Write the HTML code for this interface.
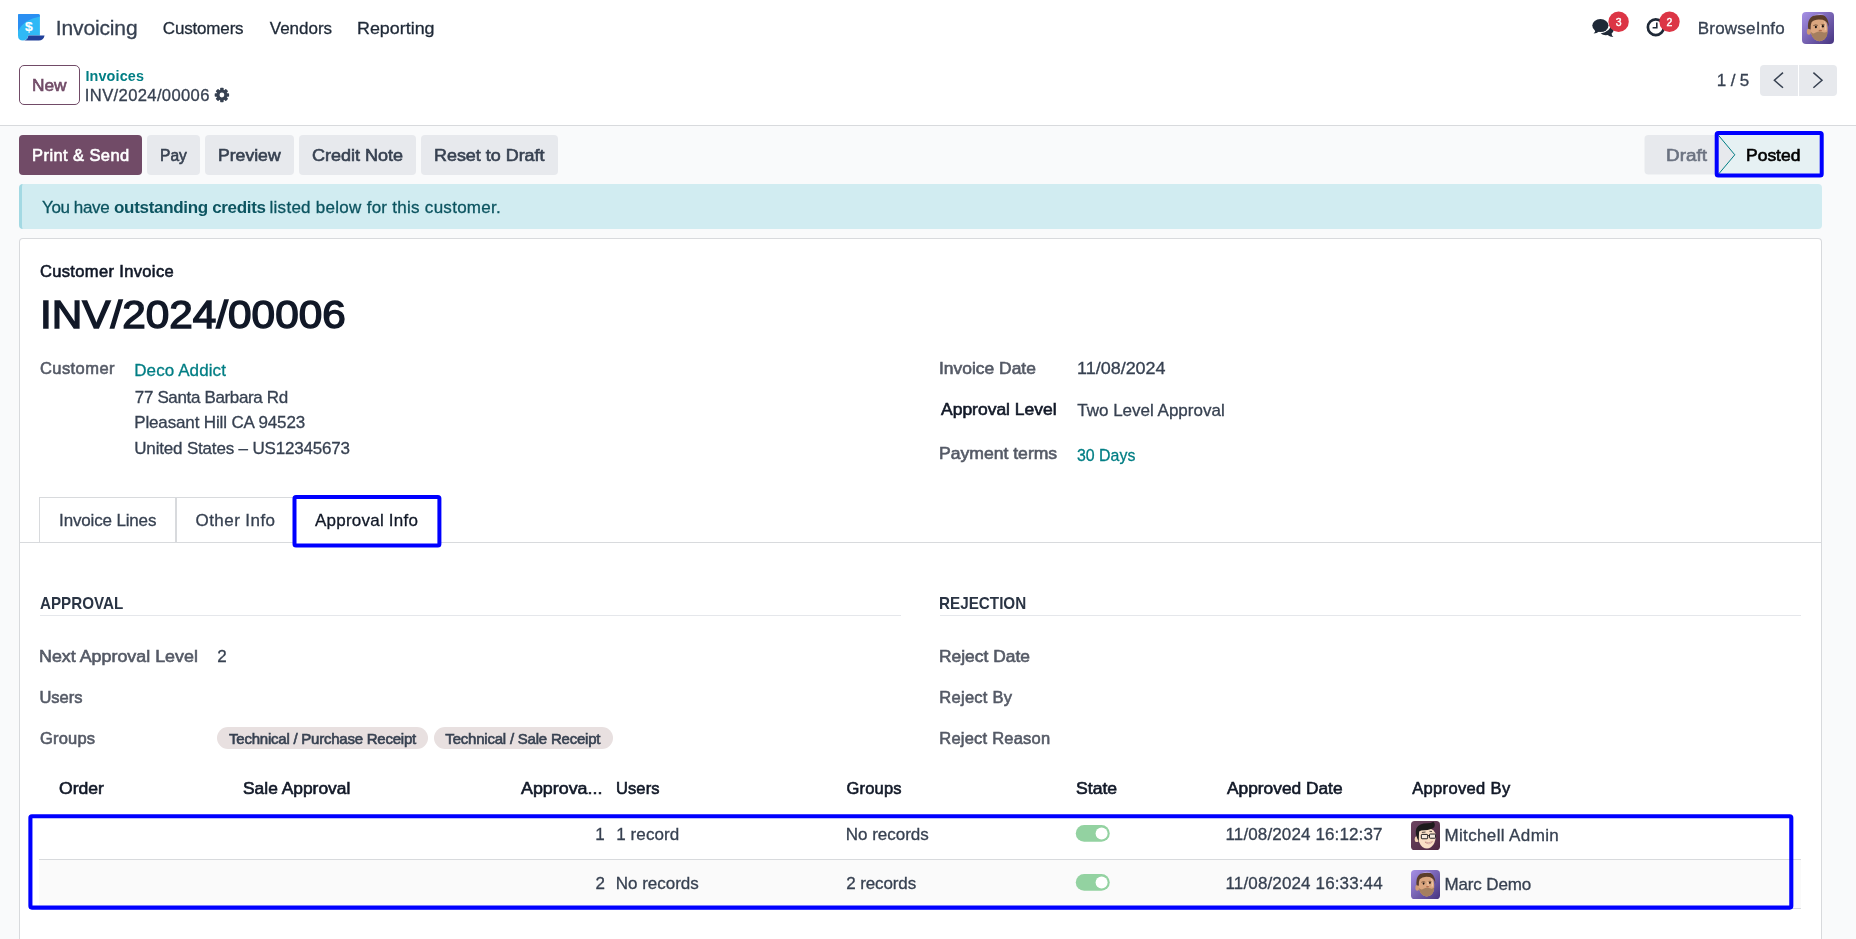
<!DOCTYPE html>
<html><head><meta charset="utf-8"><title>Odoo - INV/2024/00006</title>
<style>
html,body{margin:0;padding:0;}
body{width:1856px;height:939px;overflow:hidden;background:#f9fafb;position:relative;font-family:'Liberation Sans',sans-serif;}
.t{position:absolute;white-space:pre;line-height:1;font-family:'Liberation Sans',sans-serif;}
.b{position:absolute;box-sizing:border-box;}
</style></head><body>
<!-- top white area (navbar + control panel) -->
<div class="b" style="left:0;top:0;width:1856px;height:126px;background:#fff;border-bottom:1px solid #d8dadd;"></div>

<!-- New button -->
<div class="b" style="left:19px;top:65px;width:61px;height:40px;border:1px solid #714B67;border-radius:5px;background:#fff;"></div>

<!-- pager buttons -->
<div class="b" style="left:1759.5px;top:65px;width:38px;height:31px;background:#e7e9ed;border-radius:4px 0 0 4px;"></div>
<div class="b" style="left:1798.5px;top:65px;width:38px;height:31px;background:#e7e9ed;border-radius:0 4px 4px 0;"></div>

<!-- action buttons -->
<div class="b" style="left:19px;top:135px;width:122.75px;height:39.5px;background:#714B67;border-radius:4px;"></div>
<div class="b" style="left:147px;top:135px;width:52.75px;height:39.5px;background:#e7e9ed;border-radius:4px;"></div>
<div class="b" style="left:204.75px;top:135px;width:88.75px;height:39.5px;background:#e7e9ed;border-radius:4px;"></div>
<div class="b" style="left:298.75px;top:135px;width:116.75px;height:39.5px;background:#e7e9ed;border-radius:4px;"></div>
<div class="b" style="left:421px;top:135px;width:136.75px;height:39.5px;background:#e7e9ed;border-radius:4px;"></div>

<!-- alert -->
<div class="b" style="left:19px;top:184px;width:1802.5px;height:45px;background:#d1ecf1;border-left:3px solid #a3d9e3;border-radius:4px;"></div>

<!-- sheet -->
<div class="b" style="left:19px;top:238px;width:1803px;height:701px;background:#fff;border:1px solid #d8dadd;border-bottom:none;border-radius:4px 4px 0 0;"></div>

<!-- tabs -->
<div class="b" style="left:20px;top:542px;width:1801px;height:1px;background:#d8dadd;"></div>
<div class="b" style="left:39px;top:497px;width:137px;height:46px;border:1px solid #d8dadd;border-bottom:none;"></div>
<div class="b" style="left:176px;top:497px;width:118px;height:46px;border:1px solid #d8dadd;border-bottom:none;"></div>
<div class="b" style="left:293px;top:497px;width:146px;height:46px;border:1px solid #d8dadd;border-bottom:none;background:#fff;"></div>

<!-- section underlines -->
<div class="b" style="left:40px;top:615px;width:861px;height:1px;background:#e5e7eb;"></div>
<div class="b" style="left:940px;top:615px;width:861px;height:1px;background:#e5e7eb;"></div>

<!-- tags -->
<div class="b" style="left:217px;top:727.25px;width:211.25px;height:21.75px;background:#e8e0e0;border-radius:11px;"></div>
<div class="b" style="left:433.75px;top:727.25px;width:179px;height:21.75px;background:#e8e0e0;border-radius:11px;"></div>

<!-- table rows -->
<div class="b" style="left:39px;top:859px;width:1762px;height:1px;background:#d8dadd;"></div>
<div class="b" style="left:39px;top:860px;width:1762px;height:48px;background:#fafafa;"></div>
<div class="b" style="left:39px;top:908px;width:1762px;height:1px;background:#d8dadd;"></div>

<!-- all vector art -->
<svg class="b" style="left:0;top:0;" width="1856" height="939" viewBox="0 0 1856 939">
  <defs>
    <linearGradient id="gm" x1="0" y1="0" x2="1" y2="1"><stop offset="0" stop-color="#a791e6"/><stop offset="1" stop-color="#46347f"/></linearGradient>
    <linearGradient id="ga" x1="0" y1="0" x2="1" y2="1"><stop offset="0" stop-color="#6d4561"/><stop offset="1" stop-color="#4c2742"/></linearGradient>
    <g id="marc">
      <rect x="0" y="0" width="32" height="32" rx="4" fill="url(#gm)"/>
      <ellipse cx="6.9" cy="19.6" rx="2.1" ry="3.2" fill="#cf9a74"/>
      <path d="M8 14 Q8.4 6 16.6 5.6 Q25.4 6 25.6 15.6 Q26 24 22.2 27.6 Q17.2 30.8 12.8 27.6 Q8.4 24 8 14Z" fill="#dba67f"/>
      <path d="M21.5 8.5 Q24.6 11 24.4 18 L22.6 18.5 Q23.4 12 21.5 8.5Z" fill="#ecc3a2"/>
      <path d="M8.9 19.8 Q11 22.6 13.8 20.6 Q17 18.6 21 20.2 Q23.8 21.4 25.5 19 Q25.8 24.4 22.2 27.6 Q17.2 30.8 12.8 27.6 Q9.2 24.6 8.9 19.8Z" fill="#a57f5f"/>
      <path d="M6.2 16.8 Q4.4 4.6 15 2.4 Q26.2 0.8 27 15 Q25.6 9.4 20.6 7.8 Q13 6.4 9.6 10.2 Q8.4 12.8 8.6 17.4Z" fill="#5b3d2a"/>
      <path d="M10.6 3.8 Q16.4 0.6 23 3.2 Q17 2.4 10.6 3.8Z" fill="#b9a6ea"/>
      <ellipse cx="13.9" cy="15" rx="1" ry="1.25" fill="#161010"/>
      <ellipse cx="20.9" cy="14.2" rx="1" ry="1.25" fill="#161010"/>
      <path d="M11.4 13.6 Q13.6 12.3 15.8 13.4" stroke="#4a3222" stroke-width=".7" fill="none"/>
      <path d="M19.4 12.7 Q21 12 22.6 12.9" stroke="#4a3222" stroke-width=".6" fill="none"/>
      <ellipse cx="18.3" cy="18.5" rx="1.7" ry=".85" fill="#b06c4c"/>
      <path d="M18.3 13.2 L19.1 17.4" stroke="#edc4a4" stroke-width="1.1" />
    </g>
    <g id="mitch">
      <rect x="0" y="0" width="32" height="32" rx="4" fill="url(#ga)"/>
      <!-- ear -->
      <ellipse cx="6.4" cy="20" rx="2.3" ry="3.3" fill="#f3d2b4"/>
      <!-- face -->
      <path d="M7.6 14 Q8 8 17 8 Q27.4 8 27.2 17 Q27 25 22 29 Q17.4 32 12.6 28.6 Q7.6 24 7.6 14Z" fill="#f9dfc6"/>
      <!-- hair -->
      <path d="M8.6 22.5 Q3.6 14 6 8 Q9 2.6 18 2.6 Q22 2.6 24.6 0.8 Q27.4 2.4 25.6 7 Q22 10 15 10.2 Q10.6 10.2 9 11.6 Q8.6 16 8.6 22.5Z" fill="#1d1b1c"/>
      <!-- brows -->
      <path d="M12 12.6 L16 12.2" stroke="#2a2224" stroke-width=".9"/>
      <path d="M20.4 11.4 L23.2 11.6" stroke="#2a2224" stroke-width=".9"/>
      <!-- glasses -->
      <rect x="11.4" y="14.8" width="7" height="4.8" rx=".8" fill="#f6e9dd" stroke="#242022" stroke-width="1.1"/>
      <rect x="20.4" y="14.4" width="6.6" height="4.6" rx=".8" fill="#f6e9dd" stroke="#242022" stroke-width="1.1"/>
      <path d="M18.4 16.2 L20.4 16" stroke="#242022" stroke-width="1"/>
      <!-- smile -->
      <path d="M15.4 23.2 Q19.6 24.8 23.8 22.8 Q20 27.4 15.4 23.2Z" fill="#fff" stroke="#b8756c" stroke-width=".6"/>
    </g>
  </defs>

  <!-- logo -->
  <g transform="translate(18,14)">
    <path d="M0 1.2 Q0 0 1.2 0 H20.2 Q21.9 0 21.9 1.7 V21.6 H10.2 Q9.6 26.5 4.9 26.5 Q0 26.5 0 21.4 Z" fill="#30b9f6"/>
    <path d="M0 1.2 Q0 0 1.2 0 H20.2 Q21.9 0 21.9 1.7 V2.6 Q6 5.5 0 17 Z" fill="#2a8ff2"/>
    <path d="M10.4 21.4 H26.6 Q25.4 26.5 20.8 26.5 H4.9 Q9.6 26.5 10.4 21.4 Z" fill="#21409a"/>
    <text x="9.5" y="17.3" text-anchor="middle" font-family="'Liberation Sans',sans-serif" font-weight="700" font-size="12.2" fill="#fff" stroke="#fff" stroke-width=".15" transform="scale(1.14,1)">$</text>
  </g>

  <!-- chat icon -->
  <g fill="#1f2937">
    <path d="M1600.6 33.6 Q1603.5 35.6 1607.6 35 Q1609.8 36.8 1613.4 37 Q1611.6 35.4 1611.6 33.4 Q1614.4 31.4 1613.6 28 Q1612.8 26 1610.8 25 Q1610.4 31.600000000000001 1600.6 33.6Z"/>
    <ellipse cx="1600.4" cy="25.6" rx="8.1" ry="6.5"/>
    <path d="M1595.6 29.6 Q1595.4 32 1593.6 33.4 Q1597 33.2 1599 31.4Z"/>
  </g>
  <!-- clock icon -->
  <circle cx="1655.8" cy="27.2" r="7.9" fill="none" stroke="#1f2937" stroke-width="2.7"/>
  <path d="M1656.8 22.4 V27.7 H1652.6" fill="none" stroke="#1f2937" stroke-width="1.6"/>
  <!-- badges -->
  <circle cx="1618.6" cy="21.8" r="10.2" fill="#dc3545"/>
  <circle cx="1669.5" cy="21.8" r="10.2" fill="#dc3545"/>

  <!-- navbar avatar -->
  <use href="#marc" transform="translate(1802,12)"/>

  <!-- gear -->
  <g transform="translate(221.9,95)" fill="#374151">
    <g id="teeth">
      <rect x="-1.75" y="-7.2" width="3.5" height="14.4" rx=".7"/>
      <rect x="-1.75" y="-7.2" width="3.5" height="14.4" rx=".7" transform="rotate(45)"/>
      <rect x="-1.75" y="-7.2" width="3.5" height="14.4" rx=".7" transform="rotate(90)"/>
      <rect x="-1.75" y="-7.2" width="3.5" height="14.4" rx=".7" transform="rotate(135)"/>
    </g>
    <circle r="5.4"/>
    <circle r="2.4" fill="#fff"/>
  </g>

  <!-- pager chevrons -->
  <path d="M1783 72.6 L1774.4 80.2 L1783 87.8" fill="none" stroke="#374151" stroke-width="1.5"/>
  <path d="M1813.4 72.6 L1822 80.2 L1813.4 87.8" fill="none" stroke="#374151" stroke-width="1.5"/>

  <!-- status bar -->
  <path d="M1648.5 135 H1718.4 V174.5 H1648.5 Q1644.5 174.5 1644.5 170.5 V139 Q1644.5 135 1648.5 135Z" fill="#e7e9ed"/>
  <rect x="1718.4" y="135" width="103.1" height="39.5" fill="#e6f1f3"/>
  <path d="M1718.4 135 L1734.8 154.8 L1718.4 174.5Z" fill="#e7e9ed"/>
  <path d="M1718.4 135.2 L1734.8 154.8 L1718.4 174.3" fill="none" stroke="#017e84" stroke-width="1"/>
  <!-- blue highlight: Posted -->
  <rect x="1716.7" y="133.1" width="105" height="42.4" rx="1.5" fill="none" stroke="#0000ff" stroke-width="4"/>

  <!-- blue highlight: Approval Info tab -->
  <rect x="294.5" y="497.1" width="144.9" height="48.4" rx="1.5" fill="none" stroke="#0000ff" stroke-width="4"/>

  <!-- toggles -->
  <rect x="1075.75" y="825" width="34" height="16.75" rx="8.375" fill="#93d2a1"/>
  <circle cx="1101.6" cy="833.4" r="6" fill="#fff"/>
  <rect x="1075.75" y="874" width="34" height="16.75" rx="8.375" fill="#93d2a1"/>
  <circle cx="1101.6" cy="882.4" r="6" fill="#fff"/>

  <!-- row avatars -->
  <use href="#mitch" transform="translate(1411,821) scale(0.90625)"/>
  <use href="#marc" transform="translate(1411,870) scale(0.90625)"/>

  <!-- blue highlight: table rows -->
  <rect x="30.4" y="816.3" width="1760.9" height="91.3" rx="1.5" fill="none" stroke="#0000ff" stroke-width="4.1"/>
</svg>

<div id="tx" style="position:absolute;left:0;top:0;width:1856px;height:939px;will-change:transform;">
<span class="t" style="left:55.80px;top:17.00px;font-size:21px;font-weight:400;color:#374151;letter-spacing:-0.138px;-webkit-text-stroke:0.3px #374151;">Invoicing</span>
<span class="t" style="left:162.80px;top:20.00px;font-size:17px;font-weight:400;color:#1f2937;letter-spacing:-0.170px;-webkit-text-stroke:0.3px #1f2937;">Customers</span>
<span class="t" style="left:269.81px;top:20.00px;font-size:17px;font-weight:400;color:#1f2937;letter-spacing:-0.014px;-webkit-text-stroke:0.3px #1f2937;">Vendors</span>
<span class="t" style="left:357.39px;top:20.00px;font-size:17px;font-weight:400;color:#1f2937;-webkit-text-stroke:0.3px #1f2937;transform-origin:0 50%;transform:scaleX(1.0517);">Reporting</span>
<span class="t" style="left:1697.71px;top:20.00px;font-size:17px;font-weight:400;color:#374151;letter-spacing:0.224px;-webkit-text-stroke:0.3px #374151;">BrowseInfo</span>
<span class="t" style="left:32.27px;top:77.00px;font-size:16.5px;font-weight:400;color:#714B67;-webkit-text-stroke:0.6px #714B67;transform-origin:0 50%;transform:scaleX(1.0482);">New</span>
<span class="t" style="left:85.45px;top:69.00px;font-size:14.4px;font-weight:700;color:#017e84;letter-spacing:0.128px;">Invoices</span>
<span class="t" style="left:84.87px;top:88.00px;font-size:16.6px;font-weight:400;color:#374151;letter-spacing:0.354px;-webkit-text-stroke:0.3px #374151;">INV/2024/00006</span>
<span class="t" style="left:1716.77px;top:72.00px;font-size:17px;font-weight:400;color:#374151;letter-spacing:-0.133px;-webkit-text-stroke:0.3px #374151;">1 / 5</span>
<span class="t" style="left:32.08px;top:147.00px;font-size:16.5px;font-weight:400;color:#ffffff;letter-spacing:0.410px;-webkit-text-stroke:0.6px #ffffff;">Print &amp; Send</span>
<span class="t" style="left:159.90px;top:147.00px;font-size:16.5px;font-weight:400;color:#374151;-webkit-text-stroke:0.6px #374151;transform-origin:0 50%;transform:scaleX(0.9430);">Pay</span>
<span class="t" style="left:217.85px;top:147.00px;font-size:16.5px;font-weight:400;color:#374151;-webkit-text-stroke:0.6px #374151;transform-origin:0 50%;transform:scaleX(1.0666);">Preview</span>
<span class="t" style="left:311.88px;top:147.00px;font-size:16.5px;font-weight:400;color:#374151;-webkit-text-stroke:0.6px #374151;transform-origin:0 50%;transform:scaleX(1.0921);">Credit Note</span>
<span class="t" style="left:433.98px;top:147.00px;font-size:16.5px;font-weight:400;color:#374151;-webkit-text-stroke:0.6px #374151;transform-origin:0 50%;transform:scaleX(1.0858);">Reset to Draft</span>
<span class="t" style="left:1665.86px;top:147.00px;font-size:16.5px;font-weight:400;color:#6b7280;-webkit-text-stroke:0.6px #6b7280;transform-origin:0 50%;transform:scaleX(1.1448);">Draft</span>
<span class="t" style="left:1746.26px;top:147.00px;font-size:16.5px;font-weight:400;color:#000000;-webkit-text-stroke:0.6px #000000;transform-origin:0 50%;transform:scaleX(1.0592);">Posted</span>
<span class="t" style="left:41.99px;top:199.00px;font-size:17px;font-weight:400;color:#0c5460;letter-spacing:-0.382px;-webkit-text-stroke:0.3px #0c5460;">You have</span>
<span class="t" style="left:114.06px;top:199.00px;font-size:17px;font-weight:700;color:#0c5460;letter-spacing:-0.320px;">outstanding credits</span>
<span class="t" style="left:269.50px;top:199.00px;font-size:17px;font-weight:400;color:#0c5460;letter-spacing:0.276px;-webkit-text-stroke:0.3px #0c5460;">listed below for this customer.</span>
<span class="t" style="left:39.93px;top:263.00px;font-size:16.5px;font-weight:400;color:#111827;letter-spacing:0.357px;-webkit-text-stroke:0.6px #111827;">Customer Invoice</span>
<span class="t" style="left:40.12px;top:296.00px;font-size:38.5px;font-weight:400;color:#111827;-webkit-text-stroke:1.4px #111827;transform-origin:0 50%;transform:scaleX(1.0985);">INV/2024/00006</span>
<span class="t" style="left:39.93px;top:360.00px;font-size:16.5px;font-weight:400;color:#555a66;letter-spacing:0.443px;-webkit-text-stroke:0.6px #555a66;">Customer</span>
<span class="t" style="left:134.21px;top:362.00px;font-size:17px;font-weight:400;color:#017e84;letter-spacing:0.101px;-webkit-text-stroke:0.3px #017e84;">Deco Addict</span>
<span class="t" style="left:134.82px;top:389.00px;font-size:17px;font-weight:400;color:#374151;letter-spacing:-0.355px;-webkit-text-stroke:0.3px #374151;">77 Santa Barbara Rd</span>
<span class="t" style="left:134.21px;top:414.00px;font-size:17px;font-weight:400;color:#374151;letter-spacing:-0.140px;-webkit-text-stroke:0.3px #374151;">Pleasant Hill CA 94523</span>
<span class="t" style="left:134.27px;top:440.00px;font-size:17px;font-weight:400;color:#374151;letter-spacing:-0.178px;-webkit-text-stroke:0.3px #374151;">United States &ndash; US12345673</span>
<span class="t" style="left:939.19px;top:360.00px;font-size:16.5px;font-weight:400;color:#555a66;-webkit-text-stroke:0.6px #555a66;transform-origin:0 50%;transform:scaleX(1.0563);">Invoice Date</span>
<span class="t" style="left:1076.70px;top:360.00px;font-size:17px;font-weight:400;color:#374151;-webkit-text-stroke:0.3px #374151;transform-origin:0 50%;transform:scaleX(1.0570);">11/08/2024</span>
<span class="t" style="left:940.72px;top:401.00px;font-size:16.5px;font-weight:400;color:#111827;-webkit-text-stroke:0.6px #111827;transform-origin:0 50%;transform:scaleX(1.0595);">Approval Level</span>
<span class="t" style="left:1077.22px;top:402.00px;font-size:17px;font-weight:400;color:#374151;letter-spacing:0.002px;-webkit-text-stroke:0.3px #374151;">Two Level Approval</span>
<span class="t" style="left:939.26px;top:445.00px;font-size:16.5px;font-weight:400;color:#555a66;-webkit-text-stroke:0.6px #555a66;transform-origin:0 50%;transform:scaleX(1.0650);">Payment terms</span>
<span class="t" style="left:1077.41px;top:447.00px;font-size:17px;font-weight:400;color:#017e84;-webkit-text-stroke:0.3px #017e84;transform-origin:0 50%;transform:scaleX(0.9357);">30 Days</span>
<span class="t" style="left:59.10px;top:512.00px;font-size:17px;font-weight:400;color:#374151;letter-spacing:-0.159px;-webkit-text-stroke:0.3px #374151;">Invoice Lines</span>
<span class="t" style="left:195.57px;top:512.00px;font-size:17px;font-weight:400;color:#374151;letter-spacing:0.428px;-webkit-text-stroke:0.3px #374151;">Other Info</span>
<span class="t" style="left:315.04px;top:512.00px;font-size:17px;font-weight:400;color:#111827;letter-spacing:0.225px;-webkit-text-stroke:0.3px #111827;">Approval Info</span>
<span class="t" style="left:39.94px;top:595.00px;font-size:17px;font-weight:700;color:#2a3444;transform-origin:0 50%;transform:scaleX(0.8931);">APPROVAL</span>
<span class="t" style="left:939.41px;top:595.00px;font-size:17px;font-weight:700;color:#2a3444;transform-origin:0 50%;transform:scaleX(0.8965);">REJECTION</span>
<span class="t" style="left:39.23px;top:648.00px;font-size:16.5px;font-weight:400;color:#555a66;-webkit-text-stroke:0.6px #555a66;transform-origin:0 50%;transform:scaleX(1.0825);">Next Approval Level</span>
<span class="t" style="left:217.33px;top:648.00px;font-size:17px;font-weight:400;color:#374151;-webkit-text-stroke:0.3px #374151;">2</span>
<span class="t" style="left:39.38px;top:689.00px;font-size:16.5px;font-weight:400;color:#555a66;letter-spacing:0.018px;-webkit-text-stroke:0.6px #555a66;">Users</span>
<span class="t" style="left:39.95px;top:730.00px;font-size:16.5px;font-weight:400;color:#555a66;letter-spacing:0.200px;-webkit-text-stroke:0.6px #555a66;">Groups</span>
<span class="t" style="left:939.27px;top:648.00px;font-size:16.5px;font-weight:400;color:#555a66;-webkit-text-stroke:0.6px #555a66;transform-origin:0 50%;transform:scaleX(1.0543);">Reject Date</span>
<span class="t" style="left:939.33px;top:689.00px;font-size:16.5px;font-weight:400;color:#555a66;letter-spacing:0.266px;-webkit-text-stroke:0.6px #555a66;">Reject By</span>
<span class="t" style="left:939.33px;top:730.00px;font-size:16.5px;font-weight:400;color:#555a66;letter-spacing:0.213px;-webkit-text-stroke:0.6px #555a66;">Reject Reason</span>
<span class="t" style="left:229.12px;top:731.00px;font-size:15px;font-weight:400;color:#374151;letter-spacing:-0.236px;-webkit-text-stroke:0.6px #374151;">Technical / Purchase Receipt</span>
<span class="t" style="left:445.37px;top:731.00px;font-size:15px;font-weight:400;color:#374151;letter-spacing:-0.214px;-webkit-text-stroke:0.6px #374151;">Technical / Sale Receipt</span>
<span class="t" style="left:58.96px;top:780.00px;font-size:16.5px;font-weight:400;color:#111827;-webkit-text-stroke:0.6px #111827;transform-origin:0 50%;transform:scaleX(1.0659);">Order</span>
<span class="t" style="left:242.94px;top:780.00px;font-size:16.5px;font-weight:400;color:#111827;-webkit-text-stroke:0.6px #111827;transform-origin:0 50%;transform:scaleX(1.0538);">Sale Approval</span>
<span class="t" style="left:520.97px;top:780.00px;font-size:16.5px;font-weight:400;color:#111827;-webkit-text-stroke:0.6px #111827;transform-origin:0 50%;transform:scaleX(1.0823);">Approva...</span>
<span class="t" style="left:615.88px;top:780.00px;font-size:16.5px;font-weight:400;color:#111827;letter-spacing:0.143px;-webkit-text-stroke:0.6px #111827;">Users</span>
<span class="t" style="left:846.45px;top:780.00px;font-size:16.5px;font-weight:400;color:#111827;letter-spacing:0.200px;-webkit-text-stroke:0.6px #111827;">Groups</span>
<span class="t" style="left:1076.19px;top:780.00px;font-size:16.5px;font-weight:400;color:#111827;-webkit-text-stroke:0.6px #111827;transform-origin:0 50%;transform:scaleX(1.0682);">State</span>
<span class="t" style="left:1226.71px;top:780.00px;font-size:16.5px;font-weight:400;color:#111827;-webkit-text-stroke:0.6px #111827;transform-origin:0 50%;transform:scaleX(1.0498);">Approved Date</span>
<span class="t" style="left:1412.20px;top:780.00px;font-size:16.5px;font-weight:400;color:#111827;letter-spacing:0.351px;-webkit-text-stroke:0.6px #111827;">Approved By</span>
<span class="t" style="left:595.27px;top:826.00px;font-size:17px;font-weight:400;color:#374151;-webkit-text-stroke:0.3px #374151;">1</span>
<span class="t" style="left:616.27px;top:826.00px;font-size:17px;font-weight:400;color:#374151;letter-spacing:0.083px;-webkit-text-stroke:0.3px #374151;">1 record</span>
<span class="t" style="left:845.71px;top:826.00px;font-size:17px;font-weight:400;color:#374151;letter-spacing:-0.002px;-webkit-text-stroke:0.3px #374151;">No records</span>
<span class="t" style="left:1225.52px;top:826.00px;font-size:17px;font-weight:400;color:#374151;letter-spacing:0.123px;-webkit-text-stroke:0.3px #374151;">11/08/2024 16:12:37</span>
<span class="t" style="left:1444.46px;top:827.00px;font-size:17px;font-weight:400;color:#374151;letter-spacing:0.361px;-webkit-text-stroke:0.3px #374151;">Mitchell Admin</span>
<span class="t" style="left:595.58px;top:875.00px;font-size:17px;font-weight:400;color:#374151;-webkit-text-stroke:0.3px #374151;">2</span>
<span class="t" style="left:615.71px;top:875.00px;font-size:17px;font-weight:400;color:#374151;letter-spacing:-0.002px;-webkit-text-stroke:0.3px #374151;">No records</span>
<span class="t" style="left:846.33px;top:875.00px;font-size:17px;font-weight:400;color:#374151;letter-spacing:-0.131px;-webkit-text-stroke:0.3px #374151;">2 records</span>
<span class="t" style="left:1225.52px;top:875.00px;font-size:17px;font-weight:400;color:#374151;letter-spacing:0.135px;-webkit-text-stroke:0.3px #374151;">11/08/2024 16:33:44</span>
<span class="t" style="left:1444.46px;top:876.00px;font-size:17px;font-weight:400;color:#374151;letter-spacing:-0.123px;-webkit-text-stroke:0.3px #374151;">Marc Demo</span>
<span class="t" style="left:1615.67px;top:17.00px;font-size:10.5px;font-weight:400;color:#ffffff;-webkit-text-stroke:0.4px #ffffff;">3</span>
<span class="t" style="left:1666.47px;top:17.00px;font-size:10.5px;font-weight:400;color:#ffffff;-webkit-text-stroke:0.4px #ffffff;">2</span>
</div>
</body></html>
